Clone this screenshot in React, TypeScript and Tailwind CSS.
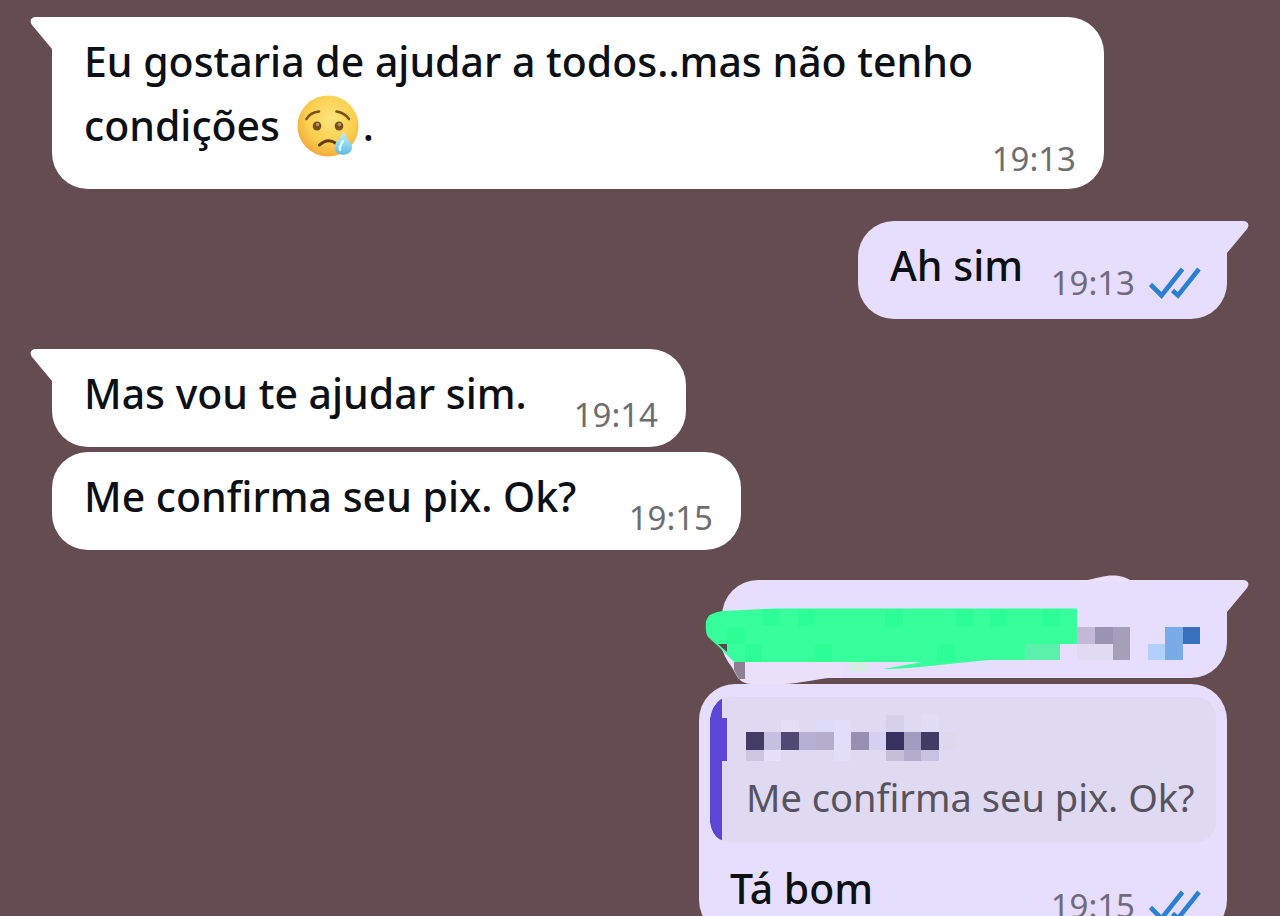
import React from 'react';
import clsx from 'clsx';

const NAME_CELLS = [
    { x: 0, y: 17, h: 18, fill: '#433c66' },
    { x: 1, y: 17, h: 18, fill: '#c5c0e2' },
    { x: 2, y: 17, h: 18, fill: '#504973' },
    { x: 3, y: 17, h: 18, fill: '#b6b0d3' },
    { x: 4, y: 17, h: 18, fill: '#b4adcc' },
    { x: 5, y: 5, h: 41, fill: '#e2defa' },
    { x: 6, y: 17, h: 18, fill: '#9790b3' },
    { x: 7, y: 17, h: 18, fill: '#d5d1f0' },
    { x: 8, y: 17, h: 18, fill: '#38305e' },
    { x: 9, y: 17, h: 18, fill: '#a29cc1' },
    { x: 10, y: 17, h: 18, fill: '#423b66' },
    { x: 11, y: 17, h: 18, fill: '#ddd8ec' },
    { x: 0, y: 35, h: 11, fill: '#cdc6e3' },
    { x: 1, y: 35, h: 13, fill: '#e6e0fa' },
    { x: 8, y: 35, h: 11, fill: '#c5bfdb' },
    { x: 9, y: 35, h: 11, fill: '#b3accb' },
    { x: 10, y: 35, h: 11, fill: '#c8c2e2' },
    { x: 2, y: 5, h: 12, fill: '#e4dff5' },
    { x: 4, y: 5, h: 12, fill: '#dedafa' },
    { x: 8, y: 0, h: 17, fill: '#d6d1ea' },
    { x: 10, y: 0, h: 17, fill: '#e2ddf6' },
];

const Tail = ({ out }: { out?: boolean }) => (
    <svg
        viewBox="0 0 24 34"
        className={clsx('absolute top-0 h-[34px] w-6', out ? '-right-[22px] -scale-x-100' : '-left-[22px]')}
        aria-hidden="true"
    >
        <path d="M24 0H6C1 0 -1 4 2 8L22 32V34H24Z" fill={out ? '#e7defd' : '#ffffff'} />
    </svg>
);

const DoubleCheck = () => (
    <svg viewBox="0 0 52 32" className="h-8 w-[52px]" fill="none" stroke="#2a80d2" strokeWidth="4.6" role="img" aria-label="Lida">
        <path d="M1.5 17.5L12.5 28.5L33.5 2" />
        <path d="M23.5 23.5L29 28.5L50 2" />
    </svg>
);

const CryingFace = () => (
    <svg viewBox="0 0 62 62" className="mr-1 ml-1.5 inline-block size-[62px] align-[-16px]" role="img" aria-label="😢">
        <defs>
            <radialGradient id="face" cx="55%" cy="38%" r="65%">
                <stop offset="0" stopColor="#fde37e" />
                <stop offset="0.6" stopColor="#fbd04f" />
                <stop offset="1" stopColor="#f2a83a" />
            </radialGradient>
            <linearGradient id="tear" x1="0" y1="0" x2="0" y2="1">
                <stop offset="0" stopColor="#c9eef8" />
                <stop offset="0.6" stopColor="#8bd3ee" />
                <stop offset="1" stopColor="#5cb9e0" />
            </linearGradient>
        </defs>
        <circle cx="31" cy="31" r="30.5" fill="url(#face)" />
        <path d="M9.5 24Q13 17.5 22 16.5M39.5 16.5Q48 18 52 24" fill="none" stroke="#7a5119" strokeWidth="2.6" strokeLinecap="round" />
        <ellipse cx="20" cy="31" rx="4.3" ry="4.6" fill="#735019" />
        <ellipse cx="42" cy="31" rx="4.3" ry="4.6" fill="#735019" />
        <circle cx="20.5" cy="29.5" r="1.8" fill="#bb9650" />
        <circle cx="42.5" cy="29.5" r="1.8" fill="#bb9650" />
        <path d="M22.5 50Q31 42 40 49" fill="none" stroke="#5e3b12" strokeWidth="3" strokeLinecap="round" />
        <path d="M46.5 36C48.5 43 55 47 55 53C54 62 38.5 62 37.5 53C37 47 44.5 43 46.5 36Z" fill="url(#tear)" />
        <path d="M46 46C44 50 42 51 43 55" fill="none" stroke="#e6fbff" strokeWidth="2.5" strokeLinecap="round" />
    </svg>
);

const Time = ({ value, read }: { value: string; read?: boolean }) => (
    <div className="flex h-10 shrink-0 items-center gap-3.5 self-end">
        <time className={clsx('text-[33px] leading-10', read ? 'text-[#716a7c]' : 'text-[#6d6e70]')}>{value}</time>
        {read && <DoubleCheck />}
    </div>
);

interface BubbleProps {
    out?: boolean;
    tail?: boolean;
    className?: string;
    children: React.ReactNode;
}

const Bubble = ({ out, tail, className, children }: BubbleProps) => (
    <article
        className={clsx(
            'relative max-w-full shrink-0 rounded-[36px]',
            out ? 'self-end bg-[#e7defd]' : 'self-start bg-white',
            tail && (out ? 'rounded-tr-none' : 'rounded-tl-none'),
            className,
        )}
    >
        {tail && <Tail out={out} />}
        {children}
    </article>
);

// Marker stroke and mosaic that cover the pix key
const Redaction = () => (
    <svg viewBox="0 0 530 125" className="absolute -top-2.5 -left-[22px] h-[125px] w-[530px]" aria-hidden="true">
        <path d="M383 11C398 8 405 5 415 5.5C423 6 427 8 433 12H383Z" fill="#ecdffb" />
        <path d="M22 80L38 108Q43 114 52 114H84C100 114 116 108 142 107V88Z" fill="#ebe0f9" />
        <path
            d="M22 41L75 38.5H377V74H360V90H290C250 93 215 99 183 99L222 92H34L18 76L8 67Q5 62 6 51Q8 43 22 41Z"
            fill="#36ff9b"
        />
        <g fill="#2cfd95">
            <path d="M62 39H80V56H62ZM98 39H115V56H98ZM185 39H203V57H185ZM256 39H274V57H256ZM290 39H307V57H290ZM342 39H360V57H342Z" />
            <path d="M45 74H62V92H45ZM115 74H132V92H115ZM237 74H255V92H237ZM27 57H45V74H27Z" />
        </g>
        <rect x="325" y="74" width="35" height="16" fill="#5bf0ab" />
        <rect x="150" y="92" width="18" height="9" fill="#d3eee0" />
        <path d="M18 74H27V82Z" fill="#5c464c" />
        <path d="M34 92H45V109H39L34 100Z" fill="#8e8093" />
        <rect x="377" y="57" width="18" height="17" fill="#c1b9d7" />
        <rect x="395" y="57" width="18" height="17" fill="#9a93b4" />
        <rect x="413" y="57" width="17" height="33" fill="#a69fb9" />
        <rect x="377" y="74" width="36" height="16" fill="#e1daf3" />
        <rect x="448" y="74" width="17" height="16" fill="#aed0fb" />
        <rect x="465" y="57" width="18" height="33" fill="#79abe6" />
        <rect x="483" y="57" width="17" height="17" fill="#3770bc" />
    </svg>
);

const Quote = () => (
    <blockquote className="relative flex flex-col gap-2.5 overflow-hidden rounded-[20px] bg-[#dfdaf1] pt-[18px] pb-[19px] pl-9">
        <svg viewBox="0 0 18 146" className="absolute top-0 left-0 h-[146px] w-[18px]" aria-hidden="true">
            <path d="M0 21Q2 8 12 1V21H17V64H12V145Q2 139 0 126Z" fill="#5b46d6" />
            <path d="M0 0H12V1Q2 8 0 21ZM0 146H12V145Q2 139 0 126Z" fill="#e7defd" />
        </svg>
        <svg viewBox="0 0 210 46" className="h-[46px] w-[210px]" shapeRendering="crispEdges" role="img" aria-label="Contato">
            {NAME_CELLS.map((cell) => (
                <rect key={`${cell.x}-${cell.y}`} x={cell.x * 17.5} y={cell.y} width="17.5" height={cell.h} fill={cell.fill} />
            ))}
        </svg>
        <p className="text-[38px] leading-[52px] whitespace-nowrap text-[#56535f]">Me confirma seu pix. Ok?</p>
    </blockquote>
);

const TEXT = 'text-[41px] leading-[64px] font-medium text-[#0c1014]';
const ROW = 'flex justify-between pt-3 pl-8';

export default function App() {
    return (
        <main className="flex h-screen flex-col overflow-hidden bg-[#644c50] pt-[17px] pr-[53px] pl-[52px] font-['Noto_Sans',sans-serif]">
            <Bubble tail className="w-[1052px]">
                <div className={clsx(ROW, 'pr-7 pb-2.5')}>
                    <p className={clsx(TEXT, 'mb-[22px]')}>
                        Eu gostaria de ajudar a todos..mas não tenho
                        <br />
                        condições <CryingFace />.
                    </p>
                    <Time value="19:13" />
                </div>
            </Bubble>

            <Bubble out tail className="mt-8 w-[369px]">
                <div className={clsx(ROW, 'pr-[26px] pb-4')}>
                    <p className={clsx(TEXT, 'mb-1.5')}>Ah sim</p>
                    <Time value="19:13" read />
                </div>
            </Bubble>

            <Bubble tail className="mt-[30px] w-[634px]">
                <div className={clsx(ROW, 'pr-7 pb-3')}>
                    <p className={clsx(TEXT, 'mb-2.5')}>Mas vou te ajudar sim.</p>
                    <Time value="19:14" />
                </div>
            </Bubble>

            <Bubble className="mt-[5px] w-[689px]">
                <div className={clsx(ROW, 'pr-7 pb-3')}>
                    <p className={clsx(TEXT, 'mb-2.5')}>Me confirma seu pix. Ok?</p>
                    <Time value="19:15" />
                </div>
            </Bubble>

            <Bubble out tail className="mt-[30px] h-[98px] w-[505px]">
                <Redaction />
            </Bubble>

            <Bubble out className="mt-1.5 w-[528px] px-[11px] pt-[13px]">
                <Quote />
                <div className="flex justify-between pt-3.5 pr-[15px] pb-2.5 pl-5">
                    <p className={clsx(TEXT, 'mb-1.5')}>Tá bom</p>
                    <Time value="19:15" read />
                </div>
            </Bubble>
        </main>
    );
}
